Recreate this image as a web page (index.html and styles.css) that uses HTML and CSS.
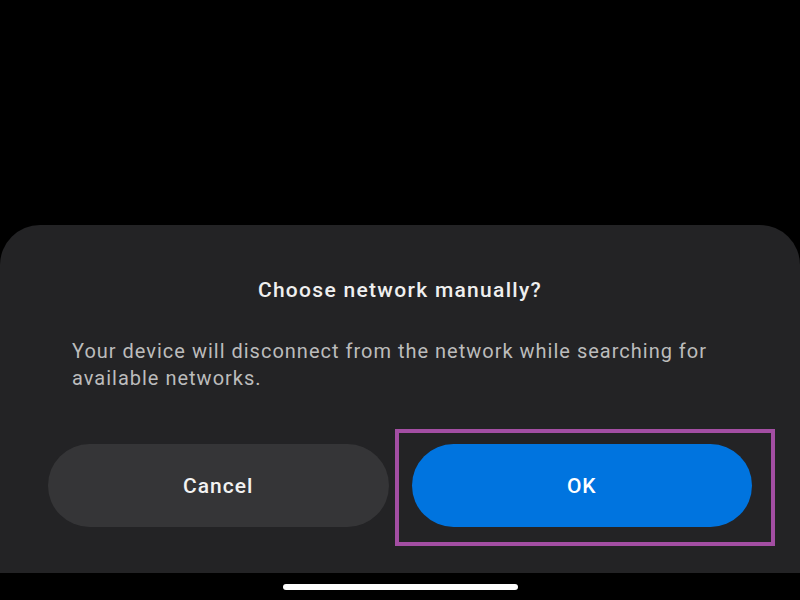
FILE: index.html
```html
<!DOCTYPE html>
<html>
<head>
<meta charset="utf-8">
<link rel="stylesheet" href="styles.css">
</head>
<body>
<div class="screen">
  <div class="spacer"></div>
  <div class="sheet">
    <h1 class="title">Choose network manually?</h1>
    <p class="message">Your device will disconnect from the network while searching for available networks.</p>
    <div class="actions">
      <button class="btn btn-cancel">Cancel</button>
      <div class="btn-wrap">
        <button class="btn btn-ok">OK</button>
        <div class="highlight"></div>
      </div>
    </div>
  </div>
  <div class="navbar"><div class="home-bar"></div></div>
</div>
</body>
</html>
```
FILE: styles.css
```css
html, body {
  margin: 0;
  padding: 0;
  background: #000;
}
.screen {
  width: 800px;
  height: 600px;
  display: flex;
  flex-direction: column;
  font-family: Roboto, "Liberation Sans", sans-serif;
}
.spacer {
  height: 225px;
  flex: none;
}
.sheet {
  height: 348px;
  flex: none;
  box-sizing: border-box;
  background: #232325;
  border-radius: 40px 40px 0 0;
  padding: 51px 48px 0 48px;
  display: flex;
  flex-direction: column;
}
.title {
  margin: 0;
  font-size: 21px;
  line-height: 28px;
  font-weight: 500;
  letter-spacing: 1.3px;
  color: #efefef;
  text-align: center;
}
.message {
  margin: 34px 24px 0 24px;
  font-size: 20px;
  line-height: 27px;
  letter-spacing: 1px;
  color: #bcbcbc;
  font-weight: 400;
}
.actions {
  margin-top: 52px;
  display: flex;
  gap: 23px;
}
.btn {
  height: 83px;
  border: none;
  border-radius: 42px;
  font-family: Roboto, "Liberation Sans", sans-serif;
  font-size: 21px;
  font-weight: 500;
  letter-spacing: 1px;
  color: #f2f2f2;
  padding: 0;
}
.btn-cancel {
  flex: 1;
  background: #353537;
}
.btn-wrap {
  flex: 1;
  position: relative;
  display: flex;
}
.btn-ok {
  flex: 1;
  background: #0074df;
  color: #fff;
}
.highlight {
  position: absolute;
  left: -17px;
  top: -15px;
  width: 380px;
  height: 117px;
  box-sizing: border-box;
  border: 4px solid #a34ea3;
  pointer-events: none;
}
.navbar {
  flex: 1;
  display: flex;
  justify-content: center;
  padding-top: 11px;
  box-sizing: border-box;
}
.home-bar {
  width: 235px;
  height: 6px;
  border-radius: 3px;
  background: #fff;
}
```
